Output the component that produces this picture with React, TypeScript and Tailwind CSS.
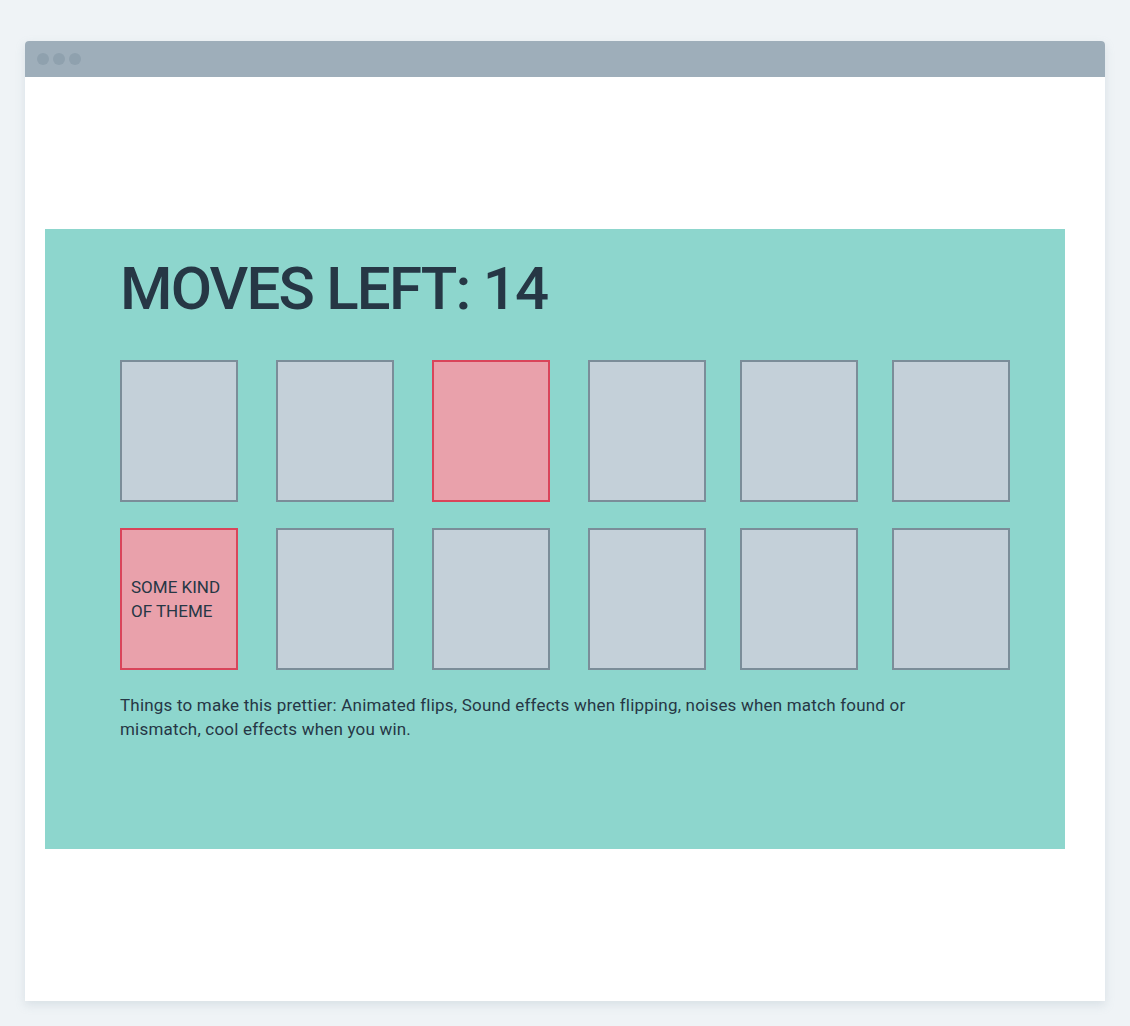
import React from "react";

interface Card {
  theme?: string;
  flipped: boolean;
  gap: string;
}

const rowOne: Card[] = [
  { flipped: false, gap: "" },
  { flipped: false, gap: "ml-[38px]" },
  { flipped: true, gap: "ml-[38px]" },
  { flipped: false, gap: "ml-[38px]" },
  { flipped: false, gap: "ml-[34px]" },
  { flipped: false, gap: "ml-[34px]" },
];

const rowTwo: Card[] = [
  { flipped: true, theme: "SOME KIND OF THEME", gap: "" },
  { flipped: false, gap: "ml-[38px]" },
  { flipped: false, gap: "ml-[38px]" },
  { flipped: false, gap: "ml-[38px]" },
  { flipped: false, gap: "ml-[34px]" },
  { flipped: false, gap: "ml-[34px]" },
];

const MemoryCard: React.FC<{ card: Card }> = ({ card }) => (
  <div
    className={`${card.gap} w-[118px] h-[142px] border-2 flex items-center px-[9px] ${
      card.flipped ? "bg-[#e9a1ab] border-[#d9455a]" : "bg-[#c4d0d9] border-[#7b8d99]"
    }`}
  >
    {card.theme && (
      <span className="text-[17px] leading-[24px] text-[#263745]">{card.theme}</span>
    )}
  </div>
);

const App: React.FC = () => {
  return (
    <div
      className="min-h-screen bg-[#eff3f6] pt-[41px] px-[25px] pb-[25px]"
      style={{ fontFamily: "Roboto, 'Liberation Sans', sans-serif" }}
    >
      {/* browser window */}
      <div className="w-[1080px] bg-white rounded-t-[4px] shadow-[0_4px_10px_rgba(150,170,185,0.25)]">
        <div className="h-[36px] bg-[#9eaeba] rounded-t-[4px] flex items-center gap-[4px] pl-[12px]">
          <span className="w-[12px] h-[12px] rounded-full bg-[#8fa1ae]" />
          <span className="w-[12px] h-[12px] rounded-full bg-[#8fa1ae]" />
          <span className="w-[12px] h-[12px] rounded-full bg-[#8fa1ae]" />
        </div>

        <div className="h-[924px] flex items-center pl-[20px]">
          {/* game board */}
          <div className="w-[1020px] h-[620px] bg-[#8dd6cd] pl-[75px] pt-[24px] text-[#263745]">
            <h1 className="text-[60px] leading-[72px] font-medium tracking-[-1.8px]">MOVES LEFT: 14</h1>

            <div className="mt-[35px] flex">
              {rowOne.map((c, i) => (
                <MemoryCard key={i} card={c} />
              ))}
            </div>
            <div className="mt-[26px] flex">
              {rowTwo.map((c, i) => (
                <MemoryCard key={i} card={c} />
              ))}
            </div>

            <p className="mt-[23px] w-[820px] text-[17px] leading-[24px] tracking-[0.2px]">
              Things to make this prettier: Animated flips, Sound effects when flipping, noises when match found or
              mismatch, cool effects when you win.
            </p>
          </div>
        </div>
      </div>
    </div>
  );
};

export default App;
